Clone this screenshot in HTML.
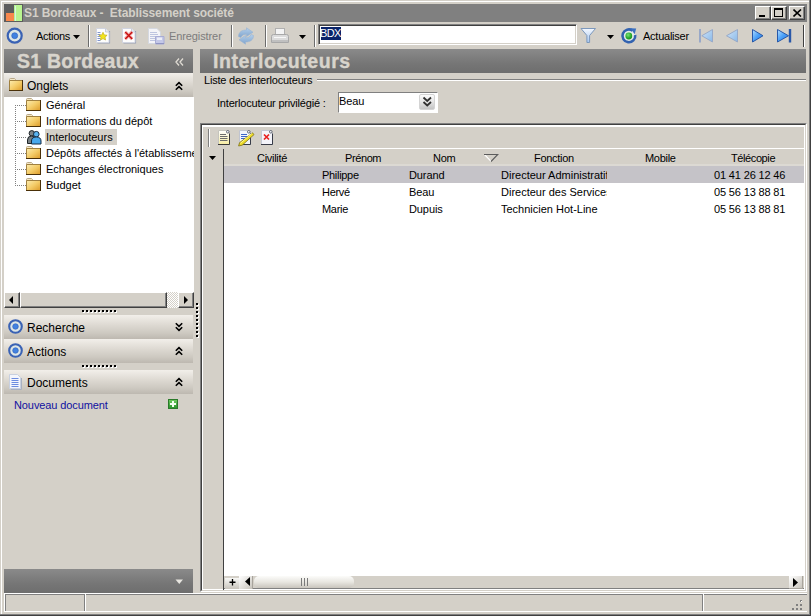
<!DOCTYPE html>
<html><head><meta charset="utf-8">
<style>
*{margin:0;padding:0;box-sizing:border-box}
html,body{width:811px;height:616px;overflow:hidden;background:#d4d0c8;font-family:"Liberation Sans",sans-serif;font-size:11px;color:#000}
.a{position:absolute}
.t{position:absolute;white-space:nowrap;line-height:1}
.sep{position:absolute;width:2px;border-left:1px solid #6c6c6c;border-right:1px solid #fff}
.hdr{position:absolute;background:linear-gradient(#8a8a8a,#767676 60%,#6e6e6e)}
.sec{position:absolute;background:linear-gradient(#f2efea,#dedad3 40%,#cdc9c1 75%,#bdb8b0)}
.btn{position:absolute;background:#d4d0c8;border-top:1px solid #fff;border-left:1px solid #fff;border-right:1px solid #404040;border-bottom:1px solid #404040;box-shadow:inset -1px -1px 0 #808080}
</style></head><body>
<!-- window frame -->
<div class="a" style="left:1px;top:1px;width:808px;height:613px;border-left:1px solid #fff;border-top:1px solid #fff"></div>
<div class="a" style="left:809px;top:0;width:1px;height:615px;background:#808080"></div>
<div class="a" style="left:810px;top:0;width:1px;height:616px;background:#404040"></div>
<div class="a" style="left:0;top:614px;width:810px;height:1px;background:#808080"></div>
<div class="a" style="left:0;top:615px;width:811px;height:1px;background:#404040"></div>

<!-- title bar -->
<div class="a" style="left:4px;top:4px;width:803px;height:18px;background:#808080"></div>
<div class="a" style="left:4px;top:4px;width:19px;height:18px;background:#5c5c5c"></div>
<div class="a" style="left:6px;top:13px;width:8px;height:8px;background:#f8884c"></div>
<div class="a" style="left:14px;top:5px;width:8px;height:16px;background:#b8f490"></div>
<div class="a" style="left:15px;top:6px;width:1px;height:15px;background:#d4f4e4"></div>
<div class="t" style="left:24px;top:7px;font-weight:bold;font-size:12px;letter-spacing:-0.1px;color:#d4d0c8">S1 Bordeaux -&nbsp; Etablissement société</div>
<div class="btn" style="left:755px;top:6px;width:16px;height:14px"><div class="a" style="left:3px;top:8px;width:6px;height:2px;background:#000"></div></div>
<div class="btn" style="left:771px;top:6px;width:16px;height:14px"><div class="a" style="left:2px;top:1px;width:9px;height:9px;border:1px solid #000;border-top-width:2px"></div></div>
<div class="btn" style="left:789px;top:6px;width:16px;height:14px"><svg class="a" style="left:3px;top:2px" width="9" height="8"><path d="M0.5 0.5L8 7.5M8 0.5L0.5 7.5" stroke="#000" stroke-width="1.6"/></svg></div>

<!-- toolbar -->
<svg class="a" style="left:6px;top:27px" width="18" height="18"><circle cx="8.7" cy="8.7" r="7" fill="#dde6e6" stroke="#3a62b4" stroke-width="2.2"/><circle cx="8.7" cy="8.7" r="3" fill="#4282e0" stroke="#2c5cb8" stroke-width=".6"/></svg>
<div class="t" style="left:36px;top:31px;letter-spacing:-0.3px">Actions</div>
<svg class="a" style="left:73px;top:35px" width="8" height="5"><path d="M0 0H7L3.5 4Z" fill="#000"/></svg>
<div class="sep" style="left:88px;top:25px;height:22px"></div>
<!-- new -->
<svg class="a" style="left:96px;top:28px" width="16" height="17"><path d="M1.5 15H13.5V3" fill="none" stroke="#98a0b4" stroke-width="1.2"/><path d="M0.5 0.5H9.5L13 4V14.5H0.5Z" fill="#fdfdfd" stroke="#d0d4e0"/><path d="M9.5 0.5V4H13" fill="#e8ecf4" stroke="#c0c4d0" stroke-width=".8"/><path d="M1.5 4.5h3M1.5 6.5h3M1.5 8.5h3M1.5 10.5h3M1.5 12.5h3" stroke="#7088c8" stroke-width=".9"/><path d="M7 4.3l1.25 2.6 2.85.35-2.1 1.95.55 2.8L7 10.6 4.45 12l.55-2.8-2.1-1.95 2.85-.35Z" fill="#f2e41c" stroke="#c4b018" stroke-width=".7"/></svg>
<!-- delete -->
<svg class="a" style="left:122px;top:28px" width="16" height="17"><path d="M1.5 15H13.5V3" fill="none" stroke="#98a0b4" stroke-width="1.2"/><path d="M0.5 0.5H9.5L13 4V14.5H0.5Z" fill="#fdfdfd" stroke="#d0d4e0"/><path d="M9.5 0.5V4H13" fill="#e8ecf4" stroke="#c0c4d0" stroke-width=".8"/><path d="M3.2 4L10.2 11M10.2 4L3.2 11" stroke="#f4b0b0" stroke-width="3.4"/><path d="M3.2 4L10.2 11M10.2 4L3.2 11" stroke="#c81010" stroke-width="1.5"/></svg>
<!-- save disabled -->
<svg class="a" style="left:148px;top:28px" width="17" height="17"><path d="M0.5 0.5H9L12.5 4V15.5H0.5Z" fill="#f4f4f8" stroke="#d4d8e0"/><path d="M2 4.5h7M2 6.5h8M2 8.5h8M2 10.5h8M2 12.5h8" stroke="#b8c0dc" stroke-width=".9"/><path d="M7.5 8.5H16V16H7.5Z" fill="#c4c8e8" stroke="#a8acd4" stroke-width="1"/><rect x="9" y="9.5" width="5" height="2.5" fill="#eceef8"/><path d="M8 15.5H16" stroke="#9094c4"/></svg>
<div class="t" style="left:169px;top:31px;color:#7c7c7c;letter-spacing:-0.1px">Enregistrer</div>
<div class="sep" style="left:231px;top:25px;height:22px"></div>
<!-- refresh disabled -->
<svg class="a" style="left:237px;top:27px" width="18" height="18"><defs><linearGradient id="rg" x1="0" y1="0" x2="0" y2="1"><stop offset="0" stop-color="#b4d0ec"/><stop offset="1" stop-color="#80a4cc"/></linearGradient></defs><path d="M1.5 9.5C1.5 5 5 3 9.5 3V0.8L16 5.2L9.5 9.6V7.2C7 7.2 5 8 3.8 10.5Z" fill="url(#rg)" stroke="#98b4d4" stroke-width=".6"/><path d="M16.5 8.5C16.5 13 13 15 8.5 15V17.2L2 12.8L8.5 8.4V10.8C11 10.8 13 10 14.2 7.5Z" fill="url(#rg)" stroke="#98b4d4" stroke-width=".6"/></svg>
<div class="sep" style="left:265px;top:25px;height:22px"></div>
<!-- printer disabled -->
<svg class="a" style="left:270px;top:27px" width="20" height="18"><rect x="5.5" y="1.5" width="9" height="7" fill="#f4f4f4" stroke="#b0b0b0"/><path d="M1.5 9.5Q1.5 7.5 3.5 7.5H16.5Q18.5 7.5 18.5 9.5V15.5H1.5Z" fill="#dcdcdc" stroke="#a8a8a8"/><rect x="2" y="13" width="16" height="2" fill="#c0c0c0"/><rect x="4" y="10" width="12" height="1" fill="#f8f8f8"/></svg>
<svg class="a" style="left:299px;top:35px" width="8" height="5"><path d="M0 0H7L3.5 4Z" fill="#000"/></svg>
<div class="sep" style="left:314px;top:25px;height:22px"></div>
<!-- textbox -->
<div class="a" style="left:318px;top:24px;width:259px;height:21px;background:#fff;border-top:1px solid #808080;border-left:1px solid #808080;border-right:1px solid #fff;border-bottom:1px solid #fff;box-shadow:inset 1px 1px 0 #404040,inset -1px -1px 0 #d4d0c8"></div>
<div class="a" style="left:321px;top:27px;width:20px;height:13px;background:#0a246a"></div>
<div class="t" style="left:320px;top:28px;color:#fff;letter-spacing:-0.6px">BDX</div>
<!-- funnel -->
<svg class="a" style="left:580px;top:27px" width="17" height="18"><defs><linearGradient id="fug" x1="0" y1="0" x2="0" y2="1"><stop offset="0" stop-color="#f4f8ff"/><stop offset="1" stop-color="#a8c8f0"/></linearGradient></defs><path d="M1 1.5H15.5L9.6 8.5V15.5H6.9V8.5Z" fill="url(#fug)" stroke="#7c98bc" stroke-width="1"/></svg>
<svg class="a" style="left:607px;top:35px" width="8" height="5"><path d="M0 0H7L3.5 4Z" fill="#000"/></svg>
<!-- refresh circle -->
<svg class="a" style="left:619px;top:27px" width="19" height="18"><defs><radialGradient id="gb" cx=".4" cy=".35" r=".7"><stop offset="0" stop-color="#7ce078"/><stop offset=".6" stop-color="#2cb030"/><stop offset="1" stop-color="#188a20"/></radialGradient></defs><circle cx="9.8" cy="9" r="6.6" fill="#e4ece8"/><path d="M13.6 3.6A6.4 6.4 0 1 0 16.2 8" fill="none" stroke="#3262b0" stroke-width="2.6"/><path d="M11.5 1.2L17.2 1.6L15.6 7.2Z" fill="#3a70c0"/><circle cx="9.8" cy="9" r="3.4" fill="url(#gb)"/></svg>
<div class="t" style="left:643px;top:31px;letter-spacing:-0.25px">Actualiser</div>
<!-- nav -->
<svg class="a" style="left:698px;top:28px" width="17" height="16"><defs><linearGradient id="ng1" x1="0" y1="0" x2="1" y2="1"><stop offset="0" stop-color="#d0e4f8"/><stop offset="1" stop-color="#88b8e8"/></linearGradient><linearGradient id="ng2" x1="0" y1="0" x2="1" y2="1"><stop offset="0" stop-color="#b8e0ff"/><stop offset=".5" stop-color="#4aa0f8"/><stop offset="1" stop-color="#2878e0"/></linearGradient></defs><rect x="1" y="1" width="2" height="13.5" fill="#98a8c8"/><path d="M14.5 1.5V14L3.8 7.75Z" fill="url(#ng1)" stroke="#98aac8" stroke-width="1"/></svg>
<svg class="a" style="left:725px;top:28px" width="14" height="16"><path d="M12.5 1.5V14L1.5 7.75Z" fill="url(#ng1)" stroke="#98aac8" stroke-width="1"/></svg>
<svg class="a" style="left:751px;top:28px" width="14" height="16"><path d="M1.5 1.5V14L12 7.75Z" fill="url(#ng2)" stroke="#2858a8" stroke-width="1"/></svg>
<svg class="a" style="left:776px;top:28px" width="17" height="16"><path d="M1.5 1.5V14L12.5 7.75Z" fill="url(#ng2)" stroke="#2858a8" stroke-width="1"/><rect x="12.8" y="1" width="2.4" height="13.5" fill="#2a58a8"/></svg>
<div class="a" style="left:803px;top:25px;width:2px;height:22px;border-left:1px solid #404040;border-right:1px solid #fff"></div>

<!-- left panel -->
<div class="hdr" style="left:4px;top:49px;width:189px;height:24px"></div>
<div class="t" style="left:17px;top:52px;font-weight:bold;font-size:19.5px;letter-spacing:0.25px;-webkit-text-stroke:0.4px #d8d4cc;color:#d8d4cc">S1 Bordeaux</div>
<svg class="a" style="left:175px;top:57.5px" width="9" height="9"><path d="M4 0.5L1 4L4 7.5M8 0.5L5 4L8 7.5" fill="none" stroke="#e0dcd4" stroke-width="1.3"/></svg>
<div class="sec" style="left:4px;top:73px;width:189px;height:24px"></div>
<svg class="a" style="left:8px;top:77px" width="17" height="15"><path d="M1.5 2.5Q1.5 1.5 2.5 1.5H6.5L7.5 2.5V3.5H1.5Z" fill="#f4e8c8" stroke="#b8a888" stroke-width="1"/><path d="M1.5 3.5H14.5V13.5H1.5Z" fill="url(#fg)" stroke="#a08040" stroke-width="1"/><path d="M1 13.5H15M14.5 3V14" stroke="#4a3008" stroke-width="1"/></svg>
<div class="t" style="left:27px;top:80px;font-size:12px">Onglets</div>
<svg class="a" style="left:175px;top:81px" width="10" height="10"><path d="M0.8 4.8L4 1.6L7.2 4.8M0.8 8.8L4 5.6L7.2 8.8" fill="none" stroke="#000" stroke-width="1.6"/></svg>
<!-- tree -->
<div class="a" style="left:4px;top:97px;width:190px;height:195px;background:#fff;overflow:hidden">
 <div class="a" style="left:11px;top:8px;width:1px;height:81px;background:repeating-linear-gradient(#808080 0 1px,transparent 1px 2px)"></div>
 <div class="a" style="left:11px;top:8px;width:11px;height:1px;background:repeating-linear-gradient(90deg,#808080 0 1px,transparent 1px 2px)"></div>
 <div class="a" style="left:11px;top:24px;width:11px;height:1px;background:repeating-linear-gradient(90deg,#808080 0 1px,transparent 1px 2px)"></div>
 <div class="a" style="left:11px;top:40px;width:11px;height:1px;background:repeating-linear-gradient(90deg,#808080 0 1px,transparent 1px 2px)"></div>
 <div class="a" style="left:11px;top:56px;width:11px;height:1px;background:repeating-linear-gradient(90deg,#808080 0 1px,transparent 1px 2px)"></div>
 <div class="a" style="left:11px;top:72px;width:11px;height:1px;background:repeating-linear-gradient(90deg,#808080 0 1px,transparent 1px 2px)"></div>
 <div class="a" style="left:11px;top:88px;width:11px;height:1px;background:repeating-linear-gradient(90deg,#808080 0 1px,transparent 1px 2px)"></div>
 <div class="a" style="left:41px;top:32px;width:72px;height:16px;background:#d4d0c8"></div>
 <svg class="a" style="left:21px;top:0px" width="17" height="97">
  <defs><linearGradient id="fg" x1="0" y1="0" x2="1" y2="1"><stop offset="0" stop-color="#fcecb0"/><stop offset=".5" stop-color="#f4cc68"/><stop offset="1" stop-color="#dc9a28"/></linearGradient></defs>
  <g transform="translate(0 0)"><path d="M1.5 2.5Q1.5 1.5 2.5 1.5H6.5L7.5 2.5V3.5H1.5Z" fill="#f4e8c8" stroke="#b8a888" stroke-width="1"/><path d="M1.5 3.5H15.5V13.5H1.5Z" fill="url(#fg)" stroke="#a08040" stroke-width="1"/><path d="M1 13.5H16M15.5 3V14" stroke="#4a3008" stroke-width="1"/></g><g transform="translate(0 16)"><path d="M1.5 2.5Q1.5 1.5 2.5 1.5H6.5L7.5 2.5V3.5H1.5Z" fill="#f4e8c8" stroke="#b8a888" stroke-width="1"/><path d="M1.5 3.5H15.5V13.5H1.5Z" fill="url(#fg)" stroke="#a08040" stroke-width="1"/><path d="M1 13.5H16M15.5 3V14" stroke="#4a3008" stroke-width="1"/></g>
  <circle cx="6.8" cy="36.3" r="2.7" fill="#7c8488" stroke="#1e2428" stroke-width="1"/><path d="M2.5 46.5V43Q2.5 39 6.5 39Q10.5 39 10.5 43V46.5Z" fill="#788084" stroke="#1e2428" stroke-width="1"/>
  <circle cx="11.3" cy="37.2" r="2.8" fill="#5ab4f0" stroke="#142c44" stroke-width="1"/><path d="M6.5 47V44Q6.5 40 11.3 40Q16 40 16 44V47Z" fill="#48a8ec" stroke="#142c44" stroke-width="1"/>
  <g transform="translate(0 48)"><path d="M1.5 2.5Q1.5 1.5 2.5 1.5H6.5L7.5 2.5V3.5H1.5Z" fill="#f4e8c8" stroke="#b8a888" stroke-width="1"/><path d="M1.5 3.5H15.5V13.5H1.5Z" fill="url(#fg)" stroke="#a08040" stroke-width="1"/><path d="M1 13.5H16M15.5 3V14" stroke="#4a3008" stroke-width="1"/></g><g transform="translate(0 64)"><path d="M1.5 2.5Q1.5 1.5 2.5 1.5H6.5L7.5 2.5V3.5H1.5Z" fill="#f4e8c8" stroke="#b8a888" stroke-width="1"/><path d="M1.5 3.5H15.5V13.5H1.5Z" fill="url(#fg)" stroke="#a08040" stroke-width="1"/><path d="M1 13.5H16M15.5 3V14" stroke="#4a3008" stroke-width="1"/></g><g transform="translate(0 80)"><path d="M1.5 2.5Q1.5 1.5 2.5 1.5H6.5L7.5 2.5V3.5H1.5Z" fill="#f4e8c8" stroke="#b8a888" stroke-width="1"/><path d="M1.5 3.5H15.5V13.5H1.5Z" fill="url(#fg)" stroke="#a08040" stroke-width="1"/><path d="M1 13.5H16M15.5 3V14" stroke="#4a3008" stroke-width="1"/></g>
 </svg>
 <div class="t" style="left:42px;top:3px">Général</div>
 <div class="t" style="left:42px;top:19px">Informations du dépôt</div>
 <div class="t" style="left:42px;top:35px">Interlocuteurs</div>
 <div class="t" style="left:42px;top:51px">Dépôts affectés à l'établissement</div>
 <div class="t" style="left:42px;top:67px">Echanges électroniques</div>
 <div class="t" style="left:42px;top:83px">Budget</div>
</div>
<!-- left hscroll -->
<div class="a" style="left:4px;top:292px;width:190px;height:16px;background:repeating-conic-gradient(#fff 0 25%,#d4d0c8 0 50%) 0 0/2px 2px"></div>
<div class="btn" style="left:4px;top:292px;width:16px;height:16px"><svg class="a" style="left:4px;top:3px" width="5" height="8"><path d="M4 0V8L0 4Z" fill="#000"/></svg></div>
<div class="btn" style="left:20px;top:292px;width:147px;height:16px"></div>
<div class="btn" style="left:178px;top:292px;width:16px;height:16px"><svg class="a" style="left:5px;top:3px" width="5" height="8"><path d="M0 0V8L4 4Z" fill="#000"/></svg></div>
<div class="a" style="left:83px;top:311px;width:36px;height:2px;background:repeating-linear-gradient(90deg,#fff 0 2px,transparent 2px 4px)"></div><div class="a" style="left:82px;top:310px;width:36px;height:2px;background:repeating-linear-gradient(90deg,#000 0 2px,transparent 2px 4px)"></div>
<!-- sections -->
<div class="sec" style="left:4px;top:315px;width:189px;height:24px"></div>
<svg class="a" style="left:7px;top:318px" width="17" height="17"><circle cx="8.5" cy="8.5" r="6.3" fill="#dde6e6" stroke="#3a62b4" stroke-width="2.1"/><circle cx="8.5" cy="8.5" r="2.8" fill="#4282e0" stroke="#2c5cb8" stroke-width=".6"/></svg>
<div class="t" style="left:27px;top:322px;font-size:12px">Recherche</div>
<svg class="a" style="left:175px;top:322px" width="10" height="10"><path d="M0.8 1.2L4 4.4L7.2 1.2M0.8 5.2L4 8.4L7.2 5.2" fill="none" stroke="#000" stroke-width="1.6"/></svg>
<div class="sec" style="left:4px;top:339px;width:189px;height:24px"></div>
<svg class="a" style="left:7px;top:342px" width="17" height="17"><circle cx="8.5" cy="8.5" r="6.3" fill="#dde6e6" stroke="#3a62b4" stroke-width="2.1"/><circle cx="8.5" cy="8.5" r="2.8" fill="#4282e0" stroke="#2c5cb8" stroke-width=".6"/></svg>
<div class="t" style="left:27px;top:346px;font-size:12px">Actions</div>
<svg class="a" style="left:175px;top:346px" width="10" height="10"><path d="M0.8 4.8L4 1.6L7.2 4.8M0.8 8.8L4 5.6L7.2 8.8" fill="none" stroke="#000" stroke-width="1.6"/></svg>
<div class="a" style="left:83px;top:366px;width:36px;height:2px;background:repeating-linear-gradient(90deg,#fff 0 2px,transparent 2px 4px)"></div><div class="a" style="left:82px;top:365px;width:36px;height:2px;background:repeating-linear-gradient(90deg,#000 0 2px,transparent 2px 4px)"></div>
<div class="sec" style="left:4px;top:370px;width:189px;height:24px"></div>
<svg class="a" style="left:9px;top:374px" width="14" height="16"><path d="M2 15.5H12.5V4" fill="none" stroke="#a8b0c0" stroke-width="1"/><path d="M0.5 0.5H8.5L11.5 3.5V14.5H0.5Z" fill="#f4f6fc" stroke="#c8d0e0"/><path d="M2.5 4.5h7M2.5 6.5h7M2.5 8.5h7M2.5 10.5h7M2.5 12.5h7" stroke="#6c8ce0" stroke-width="1"/></svg>
<div class="t" style="left:27px;top:377px;font-size:12px">Documents</div>
<svg class="a" style="left:175px;top:377px" width="10" height="10"><path d="M0.8 4.8L4 1.6L7.2 4.8M0.8 8.8L4 5.6L7.2 8.8" fill="none" stroke="#000" stroke-width="1.6"/></svg>
<div class="t" style="left:14px;top:400px;color:#1010a0;letter-spacing:-0.1px">Nouveau document</div>
<svg class="a" style="left:168px;top:399px" width="11" height="11"><defs><linearGradient id="gpl" x1="0" y1="0" x2="0" y2="1"><stop offset="0" stop-color="#70cc60"/><stop offset="1" stop-color="#28922a"/></linearGradient></defs><rect x="0.5" y="0.5" width="9" height="9" fill="url(#gpl)" stroke="#2a7a2a"/><path d="M5 2V8M2 5H8" stroke="#f4fff0" stroke-width="2"/></svg>
<div class="hdr" style="left:4px;top:569px;width:189px;height:24px"></div>
<svg class="a" style="left:175px;top:579px" width="9" height="6"><path d="M0.5 0.5H8L4.25 5Z" fill="#e8e6e0"/></svg>
<!-- vertical splitter grip -->
<div class="a" style="left:197px;top:304px;width:2px;height:35px;background:repeating-linear-gradient(#fff 0 2px,transparent 2px 4px)"></div><div class="a" style="left:196px;top:303px;width:2px;height:35px;background:repeating-linear-gradient(#000 0 2px,transparent 2px 4px)"></div>

<!-- right panel -->
<div class="hdr" style="left:200px;top:49px;width:606px;height:24px"></div>
<div class="t" style="left:213px;top:52px;font-weight:bold;font-size:19.5px;letter-spacing:0.55px;-webkit-text-stroke:0.4px #d8d4cc;color:#d8d4cc">Interlocuteurs</div>
<div class="t" style="left:204px;top:75px;letter-spacing:-0.2px">Liste des interlocuteurs</div>
<div class="a" style="left:317px;top:79px;width:489px;height:2px;border-top:1px solid #808080;border-bottom:1px solid #fff"></div>
<div class="t" style="left:217px;top:98px;letter-spacing:-0.2px">Interlocuteur privilégié :</div>
<div class="a" style="left:338px;top:92px;width:100px;height:21px;background:#fff;border-top:1px solid #808080;border-left:1px solid #808080;border-right:1px solid #fff;border-bottom:1px solid #fff"></div>
<div class="t" style="left:339px;top:96px;letter-spacing:-0.1px">Beau</div>
<div class="a" style="left:419px;top:94px;width:16px;height:16px;background:linear-gradient(#fcfcfc,#e4e4e4 50%,#c4c4c4);border:1px solid #d4d4d4;border-radius:2px"></div>
<svg class="a" style="left:422px;top:96px" width="11" height="12"><path d="M1.5 1.5L5.25 5L9 1.5M1.5 6L5.25 9.5L9 6" fill="none" stroke="#303030" stroke-width="1.8"/></svg>
<!-- grid panel -->
<div class="a" style="left:200px;top:123px;width:607px;height:469px;border-top:1px solid #808080;border-left:1px solid #808080;border-right:1px solid #fff;border-bottom:1px solid #fff"></div>
<div class="a" style="left:201px;top:124px;width:605px;height:467px;border-top:1px solid #404040;border-left:1px solid #404040;border-right:1px solid #d4d0c8;border-bottom:1px solid #d4d0c8"></div>
<div class="a" style="left:202px;top:125px;width:603px;height:465px;border-top:1px solid #fff;border-left:1px solid #fff;border-right:1px solid #fff;border-bottom:1px solid #fff"></div>
<!-- grid toolbar -->
<div class="a" style="left:203px;top:126px;width:601px;height:1px;background:#fff"></div>
<div class="a" style="left:208px;top:129px;width:2px;height:18px;border-left:1px solid #808080;border-right:1px solid #fff"></div>
<svg class="a" style="left:218px;top:130px" width="14" height="16"><defs><linearGradient id="pg1" x1="0" y1="0" x2="0" y2="1"><stop offset="0" stop-color="#ffffff"/><stop offset="1" stop-color="#f6eca0"/></linearGradient></defs><path d="M0.5 0.5H8.5L11.5 3.5V14.5H0.5Z" fill="url(#pg1)" stroke="#c4c4bc"/><path d="M0 14.5H11.5V3.5" fill="none" stroke="#383838"/><path d="M2 4.5h6M2 6.5h7.5M2 8.5h7.5M2 10.5h7.5" stroke="#6c6c6c" stroke-width="1"/><circle cx="9.8" cy="1.8" r="1.3" fill="#fff" stroke="#404858" stroke-width=".8"/></svg>
<svg class="a" style="left:237px;top:130px" width="18" height="17"><path d="M2.5 0.5H10.5L13.5 3.5V14.5H2.5Z" fill="#f0f4fc" stroke="#c0c4d0"/><path d="M2 14.5H13.5V3.5" fill="none" stroke="#383c48"/><path d="M4 4.5h6M4 6.5h7.5M4 8.5h4" stroke="#3a64c8" stroke-width="1"/><circle cx="11.8" cy="1.8" r="1.3" fill="#fff" stroke="#404858" stroke-width=".8"/><path d="M15.5 2.8L17 4.6L5.2 15.2L1.6 16L2.6 12.6Z" fill="#eedc28" stroke="#7c7018" stroke-width=".8"/><path d="M3.5 13.2L14.8 3.4" stroke="#fff8a0" stroke-width=".9"/></svg>
<svg class="a" style="left:261px;top:130px" width="14" height="16"><path d="M0.5 0.5H8.5L11.5 3.5V14.5H0.5Z" fill="#f4f4fa" stroke="#c4c8d4"/><path d="M0 14.5H11.5V3.5" fill="none" stroke="#383c48"/><circle cx="9.8" cy="1.8" r="1.3" fill="#fff" stroke="#404858" stroke-width=".8"/><path d="M3 4.5L8 9.5M8 4.5L3 9.5" stroke="#e82020" stroke-width="1.7"/></svg>
<div class="a" style="left:279px;top:148px;width:525px;height:1px;background:#fff"></div>
<!-- header -->
<div class="a" style="left:224px;top:164px;width:580px;height:2px;background:#dcd9d3"></div>
<div class="a" style="left:223px;top:149px;width:1px;height:441px;background:#404040"></div>
<svg class="a" style="left:209px;top:156px" width="8" height="5"><path d="M0 0H7L3.5 4Z" fill="#000"/></svg>
<div class="t" style="left:257px;top:153px;letter-spacing:-0.3px">Civilité</div>
<div class="t" style="left:345px;top:153px;letter-spacing:-0.4px">Prénom</div>
<div class="t" style="left:433px;top:153px;letter-spacing:-0.3px">Nom</div>
<svg class="a" style="left:483px;top:153px" width="16" height="10"><path d="M1.5 1.5L8 8.3" stroke="#fff" stroke-width="1.1"/><path d="M1 1.5H14.8L8 8.5" fill="none" stroke="#5c5c5c" stroke-width="1.1"/></svg>
<div class="t" style="left:534px;top:153px;letter-spacing:-0.3px">Fonction</div>
<div class="t" style="left:645px;top:153px;letter-spacing:-0.3px">Mobile</div>
<div class="t" style="left:731px;top:153px;letter-spacing:-0.4px">Télécopie</div>
<!-- rows -->
<div class="a" style="left:224px;top:166px;width:581px;height:409px;background:#fff"></div>
<div class="a" style="left:224px;top:166px;width:580px;height:17px;background:#c5c3c8"></div>
<div class="a" style="left:224px;top:166px;width:580px;height:51px;overflow:hidden">
 <div class="t" style="left:98px;top:4px;letter-spacing:-0.3px">Philippe</div>
 <div class="t" style="left:185px;top:4px;letter-spacing:-0.1px">Durand</div>
 <div class="t" style="left:277px;top:4px;width:106px;overflow:hidden">Directeur Administratif</div>
 <div class="t" style="left:490px;top:4px;letter-spacing:-0.15px">01 41 26 12 46</div>
 <div class="t" style="left:98px;top:21px;letter-spacing:-0.3px">Hervé</div>
 <div class="t" style="left:185px;top:21px;letter-spacing:-0.1px">Beau</div>
 <div class="t" style="left:277px;top:21px;width:106px;overflow:hidden">Directeur des Services</div>
 <div class="t" style="left:490px;top:21px;letter-spacing:-0.15px">05 56 13 88 81</div>
 <div class="t" style="left:98px;top:38px;letter-spacing:-0.3px">Marie</div>
 <div class="t" style="left:185px;top:38px;letter-spacing:-0.1px">Dupuis</div>
 <div class="t" style="left:277px;top:38px;width:106px;overflow:hidden">Technicien Hot-Line</div>
 <div class="t" style="left:490px;top:38px;letter-spacing:-0.15px">05 56 13 88 81</div>
</div>
<!-- grid hscroll -->
<div class="a" style="left:224px;top:575px;width:580px;height:14px;background:#d4d0c8;border-top:1px solid #fff;border-bottom:1px solid #808080"></div>
<div class="a" style="left:225px;top:578px;width:14px;height:11px;background:linear-gradient(#f8f8f6,#c8c4bc)"></div>
<svg class="a" style="left:228px;top:578px" width="9" height="8"><path d="M4.5 1V7.5M1.5 4.25H7.5" stroke="#000" stroke-width="1.3"/></svg>
<div class="a" style="left:239px;top:576px;width:14px;height:13px;background:linear-gradient(135deg,#fff,#c8c4bc);border-right:1px solid #a8a49c"></div>
<svg class="a" style="left:245px;top:577px" width="5" height="9"><path d="M5 0V9L0 4.5Z" fill="#000"/></svg>
<div class="a" style="left:254px;top:576px;width:100px;height:12px;border-radius:5px;background:linear-gradient(#fcfcfa,#e8e6e0 50%,#c8c4bc)"></div>
<div class="a" style="left:301px;top:578px;width:8px;height:8px;background:repeating-linear-gradient(90deg,#7a7a7a 0 1px,transparent 1px 3px)"></div>
<div class="a" style="left:789px;top:576px;width:14px;height:13px;background:linear-gradient(135deg,#fff,#c8c4bc);border-right:1px solid #a8a49c;border-bottom:1px solid #a8a49c"></div>
<svg class="a" style="left:793px;top:578px" width="6" height="9"><path d="M0 0V9L5 4.5Z" fill="#000"/></svg>

<!-- status bar -->
<div class="a" style="left:4px;top:593px;width:803px;height:1px;background:#fff"></div>
<div class="a" style="left:4px;top:593px;width:1px;height:19px;background:#fff"></div>
<div class="a" style="left:5px;top:594px;width:802px;height:1px;background:#808080"></div>
<div class="a" style="left:5px;top:594px;width:1px;height:17px;background:#808080"></div>
<div class="a" style="left:84px;top:594px;width:1px;height:17px;background:#808080"></div>
<div class="a" style="left:85px;top:594px;width:1px;height:17px;background:#fff"></div>
<div class="a" style="left:702px;top:594px;width:1px;height:17px;background:#808080"></div>
<div class="a" style="left:703px;top:594px;width:1px;height:17px;background:#fff"></div>
<div class="a" style="left:4px;top:611px;width:803px;height:1px;background:#fff"></div>
<svg class="a" style="left:792px;top:600px" width="12" height="12"><g fill="#808080"><rect x="8" y="0" width="2" height="2"/><rect x="4" y="4" width="2" height="2"/><rect x="8" y="4" width="2" height="2"/><rect x="0" y="8" width="2" height="2"/><rect x="4" y="8" width="2" height="2"/><rect x="8" y="8" width="2" height="2"/></g><g fill="#fff"><rect x="9" y="1" width="1" height="1"/></g></svg>
</body></html>
